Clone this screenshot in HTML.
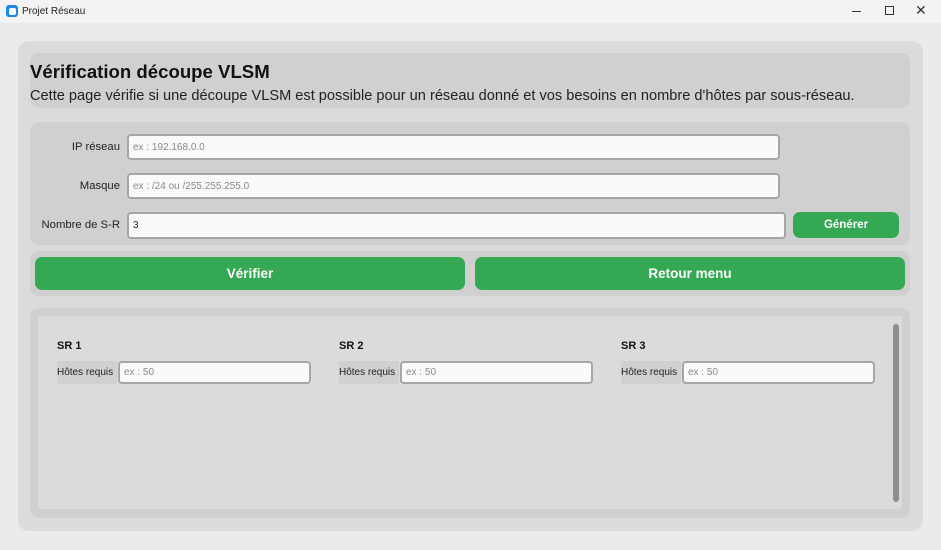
<!DOCTYPE html>
<html><head><meta charset="utf-8"><style>
*{box-sizing:border-box;margin:0;padding:0}
body{width:941px;height:550px;background:#ebebeb;font-family:"Liberation Sans",sans-serif;position:relative;overflow:hidden}
.a{position:absolute}
.tb{left:0;top:0;width:941px;height:23px;background:#f3f3f3}
.in{background:#fafafa;border:2px solid #a6a6a6;border-radius:4px;font-size:10px;color:#8a8a8a;padding-left:4px;display:flex;align-items:center}
.btn{background:#34a853;border-radius:7px;color:#fff;font-weight:bold;display:flex;align-items:center;justify-content:center}
.lbl{font-size:11.3px;color:#222;text-align:right}
</style></head><body>
<div class="a tb"></div>
<div class="a" style="left:6px;top:5px;width:12px;height:12px;border-radius:3px;background:#1e88e5"></div>
<div class="a" style="left:8.5px;top:7.5px;width:7px;height:7px;border-radius:2px;background:#fff"></div>
<div class="a" style="left:22px;top:6px;font-size:10px;color:#222">Projet Réseau</div>
<div class="a" style="left:852px;top:11px;width:9px;height:1px;background:#333"></div>
<div class="a" style="left:885px;top:6px;width:9px;height:9px;border:1px solid #333"></div>
<div class="a" style="left:915px;top:2px;font-size:14px;color:#333">✕</div>

<div class="a" style="left:18px;top:41px;width:905px;height:490px;background:#dbdbdb;border-radius:11px"></div>
<div class="a" style="left:30px;top:53px;width:880px;height:55px;background:#d0d0d0;border-radius:9px"></div>
<div class="a" style="left:30px;top:61px;font-size:18.6px;font-weight:bold;color:#111">Vérification découpe VLSM</div>
<div class="a" style="left:30px;top:88px;font-size:14.6px;color:#222;white-space:nowrap">Cette page vérifie si une découpe VLSM est possible pour un réseau donné et vos besoins en nombre d'hôtes par sous-réseau.</div>

<div class="a" style="left:30px;top:122px;width:880px;height:123px;background:#d0d0d0;border-radius:9px"></div>
<div class="a lbl" style="left:30px;top:141px;width:90px">IP réseau</div>
<div class="a in" style="left:127px;top:134px;width:653px;height:26px">ex : 192.168.0.0</div>
<div class="a lbl" style="left:30px;top:180px;width:90px">Masque</div>
<div class="a in" style="left:127px;top:173px;width:653px;height:26px">ex : /24 ou /255.255.255.0</div>
<div class="a lbl" style="left:30px;top:219px;width:90px">Nombre de S-R</div>
<div class="a in" style="left:127px;top:212px;width:659px;height:27px;color:#222">3</div>
<div class="a btn" style="left:793px;top:212px;width:106px;height:26px;font-size:11.5px">Générer</div>

<div class="a" style="left:30px;top:251px;width:880px;height:45px;background:#d0d0d0;border-radius:9px"></div>
<div class="a btn" style="left:35px;top:257px;width:430px;height:33px;font-size:13.5px">Vérifier</div>
<div class="a btn" style="left:475px;top:257px;width:430px;height:33px;font-size:13.5px">Retour menu</div>

<div class="a" style="left:30px;top:308px;width:880px;height:210px;background:#d0d0d0;border-radius:9px"></div>
<div class="a" style="left:38px;top:316px;width:864px;height:193px;background:#dbdbdb;border-radius:3px"></div>
<div class="a" style="left:893px;top:324px;width:6px;height:178px;background:#8e8e8e;border-radius:3px"></div>

<div class="a" style="left:57px;top:340px;font-size:11px;font-weight:bold;color:#111">SR 1</div>
<div class="a" style="left:57px;top:361px;width:60px;height:23px;background:#d0d0d0;font-size:10px;color:#222;display:flex;align-items:center">Hôtes requis</div>
<div class="a in" style="left:118px;top:361px;width:193px;height:23px">ex : 50</div>
<div class="a" style="left:339px;top:340px;font-size:11px;font-weight:bold;color:#111">SR 2</div>
<div class="a" style="left:339px;top:361px;width:60px;height:23px;background:#d0d0d0;font-size:10px;color:#222;display:flex;align-items:center">Hôtes requis</div>
<div class="a in" style="left:400px;top:361px;width:193px;height:23px">ex : 50</div>
<div class="a" style="left:621px;top:340px;font-size:11px;font-weight:bold;color:#111">SR 3</div>
<div class="a" style="left:621px;top:361px;width:60px;height:23px;background:#d0d0d0;font-size:10px;color:#222;display:flex;align-items:center">Hôtes requis</div>
<div class="a in" style="left:682px;top:361px;width:193px;height:23px">ex : 50</div>
</body></html>
